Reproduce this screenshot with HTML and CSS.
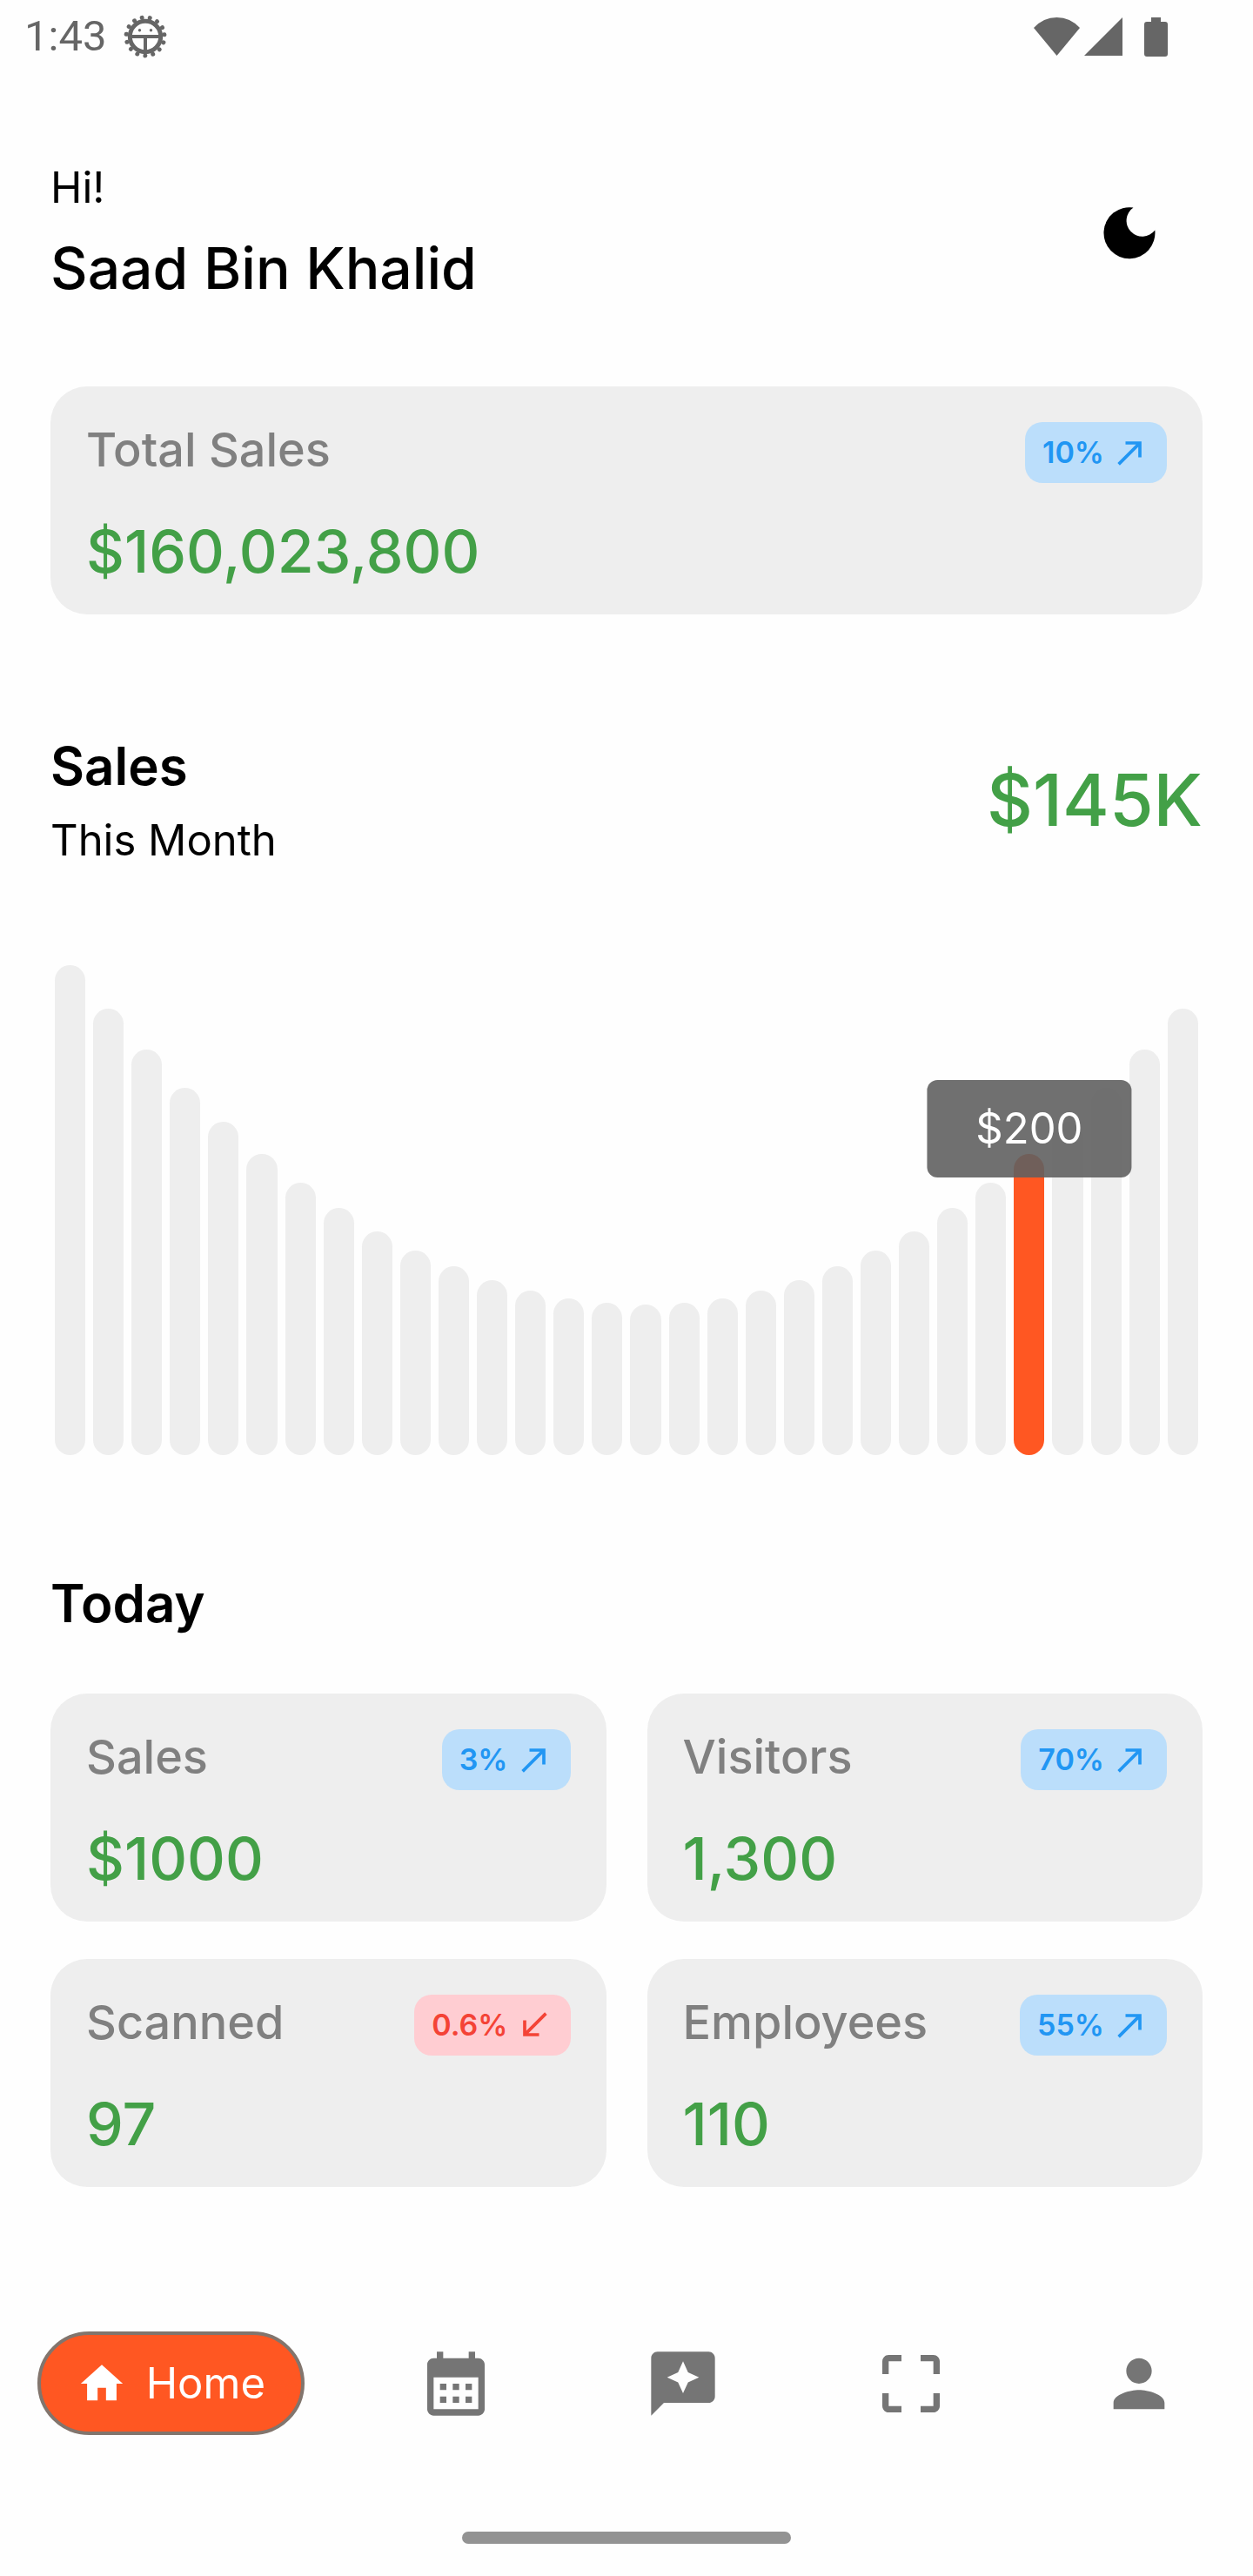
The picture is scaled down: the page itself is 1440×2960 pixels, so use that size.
FILE: index.html
```html
<!DOCTYPE html>
<html lang="en">
<head>
<meta charset="utf-8">
<meta name="viewport" content="width=device-width, initial-scale=1">
<title>Sales dashboard</title>
<link rel="stylesheet" href="styles.css">
</head>
<body>
<svg class="defs" aria-hidden="true">
  <symbol id="up" viewBox="0 0 24 24"><path d="M9 5v2h6.59L4 18.59 5.41 20 17 8.41V15h2V5z"/></symbol>
  <symbol id="down" viewBox="0 0 24 24"><path d="M20 5.41 18.59 4 7 15.59V9H5v10h10v-2H8.41z"/></symbol>
</svg>

<div class="status">
  <div class="status-left">
    <span class="time">1:43</span>
    <svg class="bug" viewBox="0 0 50 50" aria-hidden="true">
      <circle cx="25" cy="25" r="17.7" fill="none" stroke="currentColor" stroke-width="5"/>
      <circle cx="25" cy="25" r="22" fill="none" stroke="currentColor" stroke-width="5" stroke-linecap="round" stroke-dasharray="0.01 9.205" transform="rotate(-6 25 25)"/>
      <path d="M8 23h34v4H8zM23 25h4v17h-4z"/>
      <circle cx="18.500" cy="17.700" r="1.700"/><circle cx="31.500" cy="17.700" r="1.700"/>
    </svg>
  </div>
  <div class="status-right">
    <svg class="wifi" viewBox="0 0 53 44" aria-hidden="true"><path d="M0 12Q11 0 26.500 0T53 12L26.500 44z"/></svg>
    <svg class="signal" viewBox="0 0 44 44" aria-hidden="true"><path d="M44 0v44H0z"/></svg>
    <svg class="battery" viewBox="0 0 27 45" aria-hidden="true"><path d="M8 0h11v5h5q3 0 3 3v34q0 3-3 3H3q-3 0-3-3V8q0-3 3-3h5z"/></svg>
  </div>
</div>

<main class="content">
  <header class="greeting">
    <div class="stack">
      <p class="small">Hi!</p>
      <h1 class="name">Saad Bin Khalid</h1>
    </div>
    <button class="theme" type="button" aria-label="Dark mode">
      <svg viewBox="0 0 60 60" aria-hidden="true"><path d="M34.500.500A18.200 18.200 0 1 0 59.300 26.500 29.500 29.500 0 1 1 34.500.500z"/></svg>
    </button>
  </header>

  <section class="card total">
    <div class="card-top">
      <h2 class="label">Total Sales</h2>
      <span class="badge">10%<svg aria-hidden="true"><use href="#up"/></svg></span>
    </div>
    <p class="value">$160,023,800</p>
  </section>

  <section class="month">
    <div class="month-head">
      <div class="stack">
        <h2 class="heading">Sales</h2>
        <p class="small">This Month</p>
      </div>
      <p class="amount">$145K</p>
    </div>
    <div class="chart">
      <div class="bar" style="height:563px"></div>
      <div class="bar" style="height:513px"></div>
      <div class="bar" style="height:466px"></div>
      <div class="bar" style="height:422px"></div>
      <div class="bar" style="height:383px"></div>
      <div class="bar" style="height:346px"></div>
      <div class="bar" style="height:313px"></div>
      <div class="bar" style="height:284px"></div>
      <div class="bar" style="height:257px"></div>
      <div class="bar" style="height:235px"></div>
      <div class="bar" style="height:217px"></div>
      <div class="bar" style="height:201px"></div>
      <div class="bar" style="height:189px"></div>
      <div class="bar" style="height:180px"></div>
      <div class="bar" style="height:175px"></div>
      <div class="bar" style="height:173px"></div>
      <div class="bar" style="height:175px"></div>
      <div class="bar" style="height:180px"></div>
      <div class="bar" style="height:189px"></div>
      <div class="bar" style="height:201px"></div>
      <div class="bar" style="height:217px"></div>
      <div class="bar" style="height:235px"></div>
      <div class="bar" style="height:257px"></div>
      <div class="bar" style="height:284px"></div>
      <div class="bar" style="height:313px"></div>
      <div class="bar active" style="height:346px"><span class="tooltip">$200</span></div>
      <div class="bar" style="height:383px"></div>
      <div class="bar" style="height:422px"></div>
      <div class="bar" style="height:466px"></div>
      <div class="bar" style="height:513px"></div>
    </div>
  </section>

  <section class="today">
    <h2 class="heading">Today</h2>
    <div class="cards">
      <article class="card">
        <div class="card-top">
          <h3 class="label">Sales</h3>
          <span class="badge">3%<svg aria-hidden="true"><use href="#up"/></svg></span>
        </div>
        <p class="value">$1000</p>
      </article>
      <article class="card">
        <div class="card-top">
          <h3 class="label">Visitors</h3>
          <span class="badge">70%<svg aria-hidden="true"><use href="#up"/></svg></span>
        </div>
        <p class="value">1,300</p>
      </article>
      <article class="card">
        <div class="card-top">
          <h3 class="label">Scanned</h3>
          <span class="badge fall">0.6%<svg aria-hidden="true"><use href="#down"/></svg></span>
        </div>
        <p class="value">97</p>
      </article>
      <article class="card">
        <div class="card-top">
          <h3 class="label">Employees</h3>
          <span class="badge">55%<svg aria-hidden="true"><use href="#up"/></svg></span>
        </div>
        <p class="value">110</p>
      </article>
    </div>
  </section>
</main>

<nav class="nav" aria-label="Main">
  <a class="home" href="#home" aria-current="page">
    <svg viewBox="0 0 24 24" aria-hidden="true"><path d="M10 20v-6h4v6h5v-8h3L12 3 2 12h3v8z"/></svg>Home</a>
  <a class="tab" href="#calendar" aria-label="Calendar"><svg viewBox="0 0 24 24" aria-hidden="true"><path d="M19 4h-1V2h-2v2H8V2H6v2H5c-1.110 0-2 .9-2 2v14c0 1.100.9 2 2 2h14c1.100 0 2-.9 2-2V6c0-1.100-.9-2-2-2zm0 16H5V10h14v10zM9 14H7v-2h2v2zm4 0h-2v-2h2v2zm4 0h-2v-2h2v2zm-8 4H7v-2h2v2zm4 0h-2v-2h2v2zm4 0h-2v-2h2v2z"/></svg></a>
  <a class="tab" href="#assistant" aria-label="Assistant"><svg viewBox="0 0 24 24" aria-hidden="true"><path d="M20 2H4c-1.100 0-2 .9-2 2v18l4-4h14c1.100 0 2-.9 2-2V4c0-1.100-.9-2-2-2zm-6.430 9.570L12 15l-1.570-3.430L7 10l3.430-1.570L12 5l1.570 3.430L17 10z"/></svg></a>
  <a class="tab" href="#scan" aria-label="Scan"><svg viewBox="0 0 24 24" aria-hidden="true"><path d="M3 5v4h2V5h4V3H5c-1.100 0-2 .9-2 2zm2 10H3v4c0 1.100.9 2 2 2h4v-2H5v-4zm14 4h-4v2h4c1.100 0 2-.9 2-2v-4h-2v4zm0-16h-4v2h4v4h2V5c0-1.100-.9-2-2-2z"/></svg></a>
  <a class="tab" href="#profile" aria-label="Profile"><svg viewBox="0 0 24 24" aria-hidden="true"><path d="M12 12c2.210 0 4-1.790 4-4s-1.790-4-4-4-4 1.790-4 4 1.790 4 4 4zm0 2c-2.670 0-8 1.340-8 4v2h16v-2c0-2.660-5.330-4-8-4z"/></svg></a>
</nav>
<div class="gesture"></div>
</body>
</html>
```
FILE: styles.css
```css
* {
  box-sizing: border-box;
}

body {
  margin: 0;
  background: #fefefe;
  color: #000;
  font-family: Inter, "Open Sans", sans-serif;
  font-size: 49px;
  line-height: 72px;
}

h1, h2, h3, p {
  margin: 0;
}

svg {
  display: block;
  flex: none;
  fill: currentColor;
}

.defs {
  position: absolute;
  width: 0;
  height: 0;
}

/* System status bar */
.status {
  display: flex;
  justify-content: space-between;
  align-items: center;
  height: 84px;
  padding: 0 98px 0 28px;
  color: #666;
}

.status-left {
  display: flex;
  align-items: center;
  gap: 20px;
}

.time {
  font-family: Roboto, sans-serif;
}

.bug {
  width: 50px;
  height: 50px;
}

.status-right {
  display: flex;
  align-items: center;
  gap: 5px;
}

.wifi {
  width: 53px;
  height: 44px;
}

.signal {
  width: 44px;
  height: 44px;
}

.battery {
  width: 27px;
  height: 45px;
  margin-left: 20px;
}

/* Page content */
.content {
  padding: 96px 58px 0;
}

.stack {
  display: grid;
  gap: 8px;
}

.greeting {
  display: flex;
  justify-content: space-between;
  align-items: center;
}

.name {
  font-size: 66px;
  font-weight: 500;
  line-height: 96px;
}

.theme {
  padding: 24px 54px;
  border: 0;
  background: none;
  color: #000;
}

.theme svg {
  width: 60px;
  height: 60px;
}

.card {
  padding: 41px 41px 31px;
  border-radius: 42px;
  background: #eee;
}

.card-top {
  display: flex;
  justify-content: space-between;
  align-items: flex-start;
}

.label {
  color: #808080;
  font-size: 54px;
  font-weight: 500;
  line-height: 64px;
}

.badge {
  display: flex;
  align-items: center;
  gap: 8px;
  height: 70px;
  padding: 0 20px;
  border-radius: 20px;
  background: #bbdefb;
  color: #2196f3;
  font-size: 34px;
  font-weight: 600;
}

.badge svg {
  width: 44px;
  height: 44px;
}

.badge.fall {
  background: #ffcdd2;
  color: #f44336;
}

.value {
  margin-top: 36px;
  color: #43a047;
  font-size: 68px;
  font-weight: 500;
  line-height: 84px;
}

.total {
  margin-top: 88px;
}

.month {
  margin-top: 132px;
}

.month-head {
  display: flex;
  justify-content: space-between;
  align-items: center;
}

.heading {
  font-size: 60px;
  font-weight: 600;
  line-height: 84px;
}

.amount {
  color: #43a047;
  font-size: 82px;
  font-weight: 500;
  line-height: 96px;
}

.chart {
  display: flex;
  align-items: flex-end;
  gap: 9px;
  margin-top: 107px;
  padding: 0 5px;
}

.bar {
  position: relative;
  flex: 1;
  border-radius: 20px;
  background: #eee;
}

.bar.active {
  z-index: 1;
  background: #ff5722;
}

.tooltip {
  position: absolute;
  bottom: calc(100% - 27px);
  left: 50%;
  padding: 20px 56px;
  border-radius: 12px;
  background: rgba(97, 97, 97, 0.9);
  color: #fff;
  transform: translateX(-50%);
}

.today {
  margin-top: 128px;
}

.cards {
  display: grid;
  grid-template-columns: 1fr 1fr;
  gap: 43px 47px;
  margin-top: 62px;
}

/* Bottom navigation */
.nav {
  display: grid;
  grid-template-columns: 3fr 2fr 2fr 2fr 2fr;
  align-items: center;
  justify-items: center;
  margin-top: 166px;
}

.home {
  display: flex;
  align-items: center;
  gap: 22px;
  height: 119px;
  padding: 0 41px;
  border: 4px solid #82756d;
  border-radius: 60px;
  background: #ff5722;
  color: #fff;
  text-decoration: none;
}

.home svg {
  width: 58px;
  height: 58px;
}

.tab {
  color: #757575;
}

.tab svg {
  width: 88px;
  height: 88px;
}

.gesture {
  width: 378px;
  height: 14px;
  margin: 111px auto 35px;
  border-radius: 7px;
  background: #939393;
}
```
